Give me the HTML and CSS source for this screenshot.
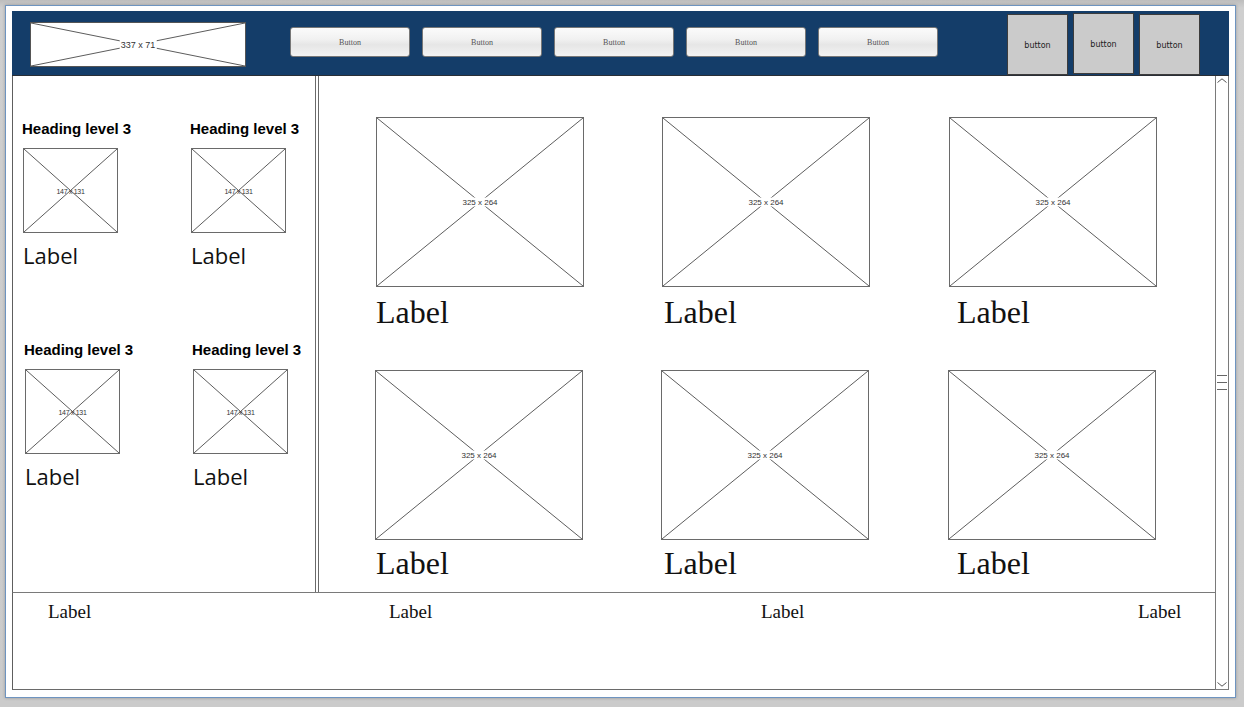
FILE: index.html
```html
<!DOCTYPE html>
<html>
<head>
<meta charset="utf-8">
<title>Wireframe</title>
<link rel="stylesheet" href="styles.css">
</head>
<body>
<div class="window">
  <header class="topbar">
    <div class="ph logo">
      <svg class="x" viewBox="0 0 100 100" preserveAspectRatio="none"><line x1="0" y1="0" x2="100" y2="100" vector-effect="non-scaling-stroke"/><line x1="100" y1="0" x2="0" y2="100" vector-effect="non-scaling-stroke"/></svg>
      <span class="cap cap-logo">337 x 71</span>
    </div>
    <nav class="navbtns">
      <button class="btn">Button</button>
      <button class="btn">Button</button>
      <button class="btn">Button</button>
      <button class="btn">Button</button>
      <button class="btn">Button</button>
    </nav>
    <div class="sqbtns">
      <div class="sq">button</div>
      <div class="sq sq-up">button</div>
      <div class="sq">button</div>
    </div>
  </header>

  <div class="body">
    <div class="content">
      <div class="panels">
        <aside class="sidebar">
          <div class="sgrid">
            <div class="card">
              <h3>Heading level 3</h3>
              <div class="ph sm">
                <svg class="x" viewBox="0 0 100 100" preserveAspectRatio="none"><line x1="0" y1="0" x2="100" y2="100" vector-effect="non-scaling-stroke"/><line x1="100" y1="0" x2="0" y2="100" vector-effect="non-scaling-stroke"/></svg>
                <span class="cap cap-sm">147 x 131</span>
              </div>
              <div class="lbl">Label</div>
            </div>
            <div class="card">
              <h3>Heading level 3</h3>
              <div class="ph sm">
                <svg class="x" viewBox="0 0 100 100" preserveAspectRatio="none"><line x1="0" y1="0" x2="100" y2="100" vector-effect="non-scaling-stroke"/><line x1="100" y1="0" x2="0" y2="100" vector-effect="non-scaling-stroke"/></svg>
                <span class="cap cap-sm">147 x 131</span>
              </div>
              <div class="lbl">Label</div>
            </div>
            <div class="card r2">
              <h3>Heading level 3</h3>
              <div class="ph sm">
                <svg class="x" viewBox="0 0 100 100" preserveAspectRatio="none"><line x1="0" y1="0" x2="100" y2="100" vector-effect="non-scaling-stroke"/><line x1="100" y1="0" x2="0" y2="100" vector-effect="non-scaling-stroke"/></svg>
                <span class="cap cap-sm">147 x 131</span>
              </div>
              <div class="lbl">Label</div>
            </div>
            <div class="card r2">
              <h3>Heading level 3</h3>
              <div class="ph sm">
                <svg class="x" viewBox="0 0 100 100" preserveAspectRatio="none"><line x1="0" y1="0" x2="100" y2="100" vector-effect="non-scaling-stroke"/><line x1="100" y1="0" x2="0" y2="100" vector-effect="non-scaling-stroke"/></svg>
                <span class="cap cap-sm">147 x 131</span>
              </div>
              <div class="lbl">Label</div>
            </div>
          </div>
        </aside>

        <main class="main">
          <div class="mgrid">
            <div class="mcard">
              <div class="ph lg">
                <svg class="x" viewBox="0 0 100 100" preserveAspectRatio="none"><line x1="0" y1="0" x2="100" y2="100" vector-effect="non-scaling-stroke"/><line x1="100" y1="0" x2="0" y2="100" vector-effect="non-scaling-stroke"/></svg>
                <span class="cap cap-lg">325 x 264</span>
              </div>
              <div class="slbl">Label</div>
            </div>
            <div class="mcard c2">
              <div class="ph lg">
                <svg class="x" viewBox="0 0 100 100" preserveAspectRatio="none"><line x1="0" y1="0" x2="100" y2="100" vector-effect="non-scaling-stroke"/><line x1="100" y1="0" x2="0" y2="100" vector-effect="non-scaling-stroke"/></svg>
                <span class="cap cap-lg">325 x 264</span>
              </div>
              <div class="slbl">Label</div>
            </div>
            <div class="mcard c3">
              <div class="ph lg">
                <svg class="x" viewBox="0 0 100 100" preserveAspectRatio="none"><line x1="0" y1="0" x2="100" y2="100" vector-effect="non-scaling-stroke"/><line x1="100" y1="0" x2="0" y2="100" vector-effect="non-scaling-stroke"/></svg>
                <span class="cap cap-lg">325 x 264</span>
              </div>
              <div class="slbl">Label</div>
            </div>
            <div class="mcard r2">
              <div class="ph lg">
                <svg class="x" viewBox="0 0 100 100" preserveAspectRatio="none"><line x1="0" y1="0" x2="100" y2="100" vector-effect="non-scaling-stroke"/><line x1="100" y1="0" x2="0" y2="100" vector-effect="non-scaling-stroke"/></svg>
                <span class="cap cap-lg">325 x 264</span>
              </div>
              <div class="slbl">Label</div>
            </div>
            <div class="mcard c2 r2">
              <div class="ph lg">
                <svg class="x" viewBox="0 0 100 100" preserveAspectRatio="none"><line x1="0" y1="0" x2="100" y2="100" vector-effect="non-scaling-stroke"/><line x1="100" y1="0" x2="0" y2="100" vector-effect="non-scaling-stroke"/></svg>
                <span class="cap cap-lg">325 x 264</span>
              </div>
              <div class="slbl">Label</div>
            </div>
            <div class="mcard c3 r2">
              <div class="ph lg">
                <svg class="x" viewBox="0 0 100 100" preserveAspectRatio="none"><line x1="0" y1="0" x2="100" y2="100" vector-effect="non-scaling-stroke"/><line x1="100" y1="0" x2="0" y2="100" vector-effect="non-scaling-stroke"/></svg>
                <span class="cap cap-lg">325 x 264</span>
              </div>
              <div class="slbl">Label</div>
            </div>
          </div>
        </main>
      </div>

      <footer class="footer">
        <span>Label</span>
        <span>Label</span>
        <span>Label</span>
        <span>Label</span>
      </footer>
    </div>

    <div class="scrollbar">
      <svg class="chev" width="10" height="5" viewBox="0 0 10 5"><polyline points="0.5,4.5 5,0.8 9.5,4.5"/></svg>
      <div class="grip"><i></i><i></i><i></i></div>
      <svg class="chev" width="10" height="5" viewBox="0 0 10 5"><polyline points="0.5,0.5 5,4.2 9.5,0.5"/></svg>
    </div>
  </div>
</div>
</body>
</html>
```

FILE: styles.css
```css
* { box-sizing: border-box; }

html, body {
  margin: 0;
  padding: 0;
}

body {
  background: linear-gradient(#bdbdbd, #cfcfcf 8px, #cbcbcb);
  padding: 5px 0 0 5px;
  width: 1244px;
  height: 707px;
  overflow: hidden;
  font-family: "Liberation Sans", Arial, sans-serif;
  color: #111;
}

.window {
  width: 1231px;
  height: 693px;
  background: #fff;
  border: 1px solid #6e94c0;
  padding: 5px 6px 7px 6px;
  display: flex;
  flex-direction: column;
  box-shadow: 0 0 3px rgba(0,0,0,0.25);
}

/* ---------- header ---------- */
.topbar {
  height: 65px;
  flex: none;
  background: #143d69;
  border-bottom: 1px solid #2a2f36;
  display: flex;
  align-items: flex-start;
  padding: 0 29px 0 18px;
}

.ph {
  position: relative;
  background: #fff;
  border: 1px solid #6a6a6a;
}
.ph .x {
  position: absolute;
  inset: 0;
  width: 100%;
  height: 100%;
  display: block;
}
.ph .x line {
  stroke: #5c5c5c;
  stroke-width: 1;
}
.cap {
  position: absolute;
  left: 50%;
  top: 50%;
  transform: translate(-50%, -50%);
  white-space: nowrap;
  color: #333;
  background: #fff;
  line-height: 1;
  padding: 0 1px;
}

.logo {
  width: 216px;
  height: 45px;
  margin-top: 11px;
  margin-right: 44px;
  border-color: #555;
}
.cap-logo {
  font: 9px "Liberation Sans", Arial, sans-serif;
  color: #333;
}

.navbtns {
  display: flex;
  gap: 12px;
  margin-top: 16px;
}
.btn {
  width: 120px;
  height: 30px;
  border: 1px solid #777;
  border-radius: 3px;
  background: linear-gradient(#fbfbfb, #f1f1f1 40%, #e6e6e6 60%, #f3f3f3);
  font: 8px "Liberation Serif", "Times New Roman", serif;
  color: #555;
  padding: 0;
}

.sqbtns {
  margin-left: auto;
  display: flex;
  gap: 5px;
  margin-top: 3px;
}
.sq {
  width: 61px;
  height: 61px;
  background: #cbcbcb;
  border: 1px solid #3c3c3c;
  display: flex;
  align-items: center;
  justify-content: center;
  font: 8px "DejaVu Sans", sans-serif;
  color: #222;
  padding-top: 1px;
}
.sq-up {
  margin-top: -1px;
}

/* ---------- body ---------- */
.body {
  flex: 1;
  display: flex;
  min-height: 0;
}
.content {
  width: 1203px;
  display: flex;
  flex-direction: column;
}
.panels {
  height: 516px;
  display: flex;
}

.sidebar {
  width: 304px;
  border-left: 1px solid #5e5e5e;
  border-right: 1px solid #6a6a6a;
  margin-right: 2px;
}
.sgrid {
  display: grid;
  grid-template-columns: 168px 130px;
  row-gap: 73px;
  padding: 44px 0 0 9px;
}
.card h3 {
  margin: 0;
  font: bold 15px/18px "Liberation Sans", Arial, sans-serif;
  color: #000;
  white-space: nowrap;
}
.card .sm {
  width: 95px;
  height: 85px;
  margin: 10px 0 0 1px;
}
.cap-sm {
  font: 7px "Liberation Sans", Arial, sans-serif;
  letter-spacing: -0.3px;
  background: transparent;
}
.card .lbl {
  margin: 9px 0 0 1px;
  font: 22px/26px "Open Sans", "Noto Sans", sans-serif;
  color: #111;
}
.card.r2 {
  margin-left: 2px;
}

.main {
  flex: 1;
  border-left: 1px solid #6a6a6a;
}
.mgrid {
  display: grid;
  grid-template-columns: 286px 287px 287px;
  row-gap: 40px;
  padding: 41px 0 0 57px;
}
.mcard .lg {
  width: 208px;
  height: 170px;
}
.cap-lg {
  font: 8px "Liberation Sans", Arial, sans-serif;
  color: #333;
}
.mcard .slbl {
  margin-top: 7px;
  font: 32px/36px "Liberation Serif", "Times New Roman", serif;
  color: #111;
}
.mcard.c2 .slbl { margin-left: 2px; }
.mcard.c3 .slbl { margin-left: 8px; }
.mcard.r2 .lg { margin-left: -1px; }
.mcard.r2 .slbl { margin-top: 5px; }

/* ---------- footer ---------- */
.footer {
  flex: 1;
  border-left: 1px solid #5e5e5e;
  border-top: 1px solid #7a7a7a;
  border-bottom: 1px solid #6a6a6a;
  display: grid;
  grid-template-columns: 341px 372px 377px auto;
  align-content: start;
  padding: 8px 0 0 35px;
  font: 19px/22px "Liberation Serif", "Times New Roman", serif;
  color: #111;
}

/* ---------- scrollbar ---------- */
.scrollbar {
  width: 14px;
  border-left: 1px solid #7a7a7a;
  border-right: 1px solid #7a7a7a;
  border-bottom: 1px solid #7a7a7a;
  display: flex;
  flex-direction: column;
  align-items: center;
  justify-content: space-between;
  padding: 2px 0 2px;
}
.chev polyline {
  fill: none;
  stroke: #555;
  stroke-width: 1;
}
.grip {
  display: flex;
  flex-direction: column;
  gap: 6px;
}
.grip i {
  display: block;
  width: 10px;
  height: 1px;
  background: #666;
}
```
